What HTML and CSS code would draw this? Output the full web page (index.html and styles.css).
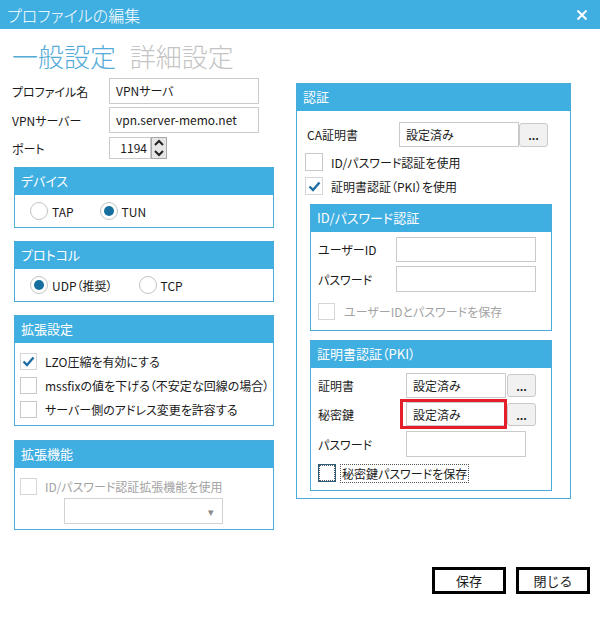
FILE: index.html
```html
<!DOCTYPE html>
<html lang="ja">
<head>
    <meta charset="UTF-8">
    <title>プロファイルの編集</title>
    <link rel="stylesheet" href="styles.css">
</head>
<body>
<div class="window">
    <div class="titlebar">
        <span class="title">プロファイルの編集</span>
        <svg class="close" width="12" height="12" viewBox="0 0 12 12"><path d="M1.5 1.5 L10.5 10.5 M10.5 1.5 L1.5 10.5" stroke="#fff" stroke-width="2" fill="none"/></svg>
    </div>

    <div class="tabs">
        <span class="tab active">一般設定</span>
        <span class="tab">詳細設定</span>
    </div>

    <div class="content">
        <!-- left column -->
        <div class="col-left">
            <div class="form-row">
                <span class="label">プロファイル名</span>
                <div class="textbox wide">VPNサーバ</div>
            </div>
            <div class="form-row">
                <span class="label">VPNサーバー</span>
                <div class="textbox wide">vpn.server-memo.net</div>
            </div>
            <div class="form-row port-row">
                <span class="label">ポート</span>
                <div class="spin">
                    <div class="textbox port">1194</div>
                    <div class="spin-buttons">
                        <svg width="14" height="10" viewBox="0 0 14 10"><path d="M3 7 L7 3 L11 7" stroke="#222" stroke-width="2" fill="none"/></svg>
                        <svg width="14" height="10" viewBox="0 0 14 10"><path d="M3 3 L7 7 L11 3" stroke="#222" stroke-width="2" fill="none"/></svg>
                    </div>
                </div>
            </div>

            <div class="panel panel-device">
                <div class="panel-header">デバイス</div>
                <div class="panel-body radios">
                    <span class="radio-item"><span class="radio"></span>TAP</span>
                    <span class="radio-item"><span class="radio on"></span>TUN</span>
                </div>
            </div>

            <div class="panel panel-protocol">
                <div class="panel-header">プロトコル</div>
                <div class="panel-body radios">
                    <span class="radio-item"><span class="radio on"></span>UDP（推奨）</span>
                    <span class="radio-item"><span class="radio"></span>TCP</span>
                </div>
            </div>

            <div class="panel panel-ext">
                <div class="panel-header">拡張設定</div>
                <div class="panel-body checks">
                    <div class="check-row"><span class="checkbox checked"><svg width="15" height="15" viewBox="0 0 15 15"><path d="M2.5 7.5 L6 11 L12.5 3.5" stroke="#1e6ea3" stroke-width="2.4" fill="none"/></svg></span>LZO圧縮を有効にする</div>
                    <div class="check-row"><span class="checkbox"></span>mssfixの値を下げる（不安定な回線の場合）</div>
                    <div class="check-row"><span class="checkbox"></span>サーバー側のアドレス変更を許容する</div>
                </div>
            </div>

            <div class="panel panel-plugin">
                <div class="panel-header">拡張機能</div>
                <div class="panel-body checks">
                    <div class="check-row disabled"><span class="checkbox"></span>ID/パスワード認証拡張機能を使用</div>
                    <div class="dropdown"><span class="arrow">▾</span></div>
                </div>
            </div>
        </div>

        <!-- right column -->
        <div class="col-right">
            <div class="panel panel-auth">
                <div class="panel-header">認証</div>
                <div class="panel-body">
                    <div class="file-row ca-row">
                        <span class="label">CA証明書</span>
                        <div class="textbox file">設定済み</div>
                        <span class="browse">...</span>
                    </div>
                    <div class="check-row"><span class="checkbox"></span>ID/パスワード認証を使用</div>
                    <div class="check-row"><span class="checkbox checked"><svg width="15" height="15" viewBox="0 0 15 15"><path d="M2.5 7.5 L6 11 L12.5 3.5" stroke="#1e6ea3" stroke-width="2.4" fill="none"/></svg></span>証明書認証（PKI）を使用</div>

                    <div class="panel sub-panel panel-idpw">
                        <div class="panel-header">ID/パスワード認証</div>
                        <div class="panel-body">
                            <div class="field-row">
                                <span class="label">ユーザーID</span>
                                <div class="textbox field"></div>
                            </div>
                            <div class="field-row">
                                <span class="label">パスワード</span>
                                <div class="textbox field tall"></div>
                            </div>
                            <div class="check-row disabled"><span class="checkbox"></span>ユーザーIDとパスワードを保存</div>
                        </div>
                    </div>

                    <div class="panel sub-panel panel-pki">
                        <div class="panel-header">証明書認証（PKI）</div>
                        <div class="panel-body">
                            <div class="file-row">
                                <span class="label">証明書</span>
                                <div class="textbox file">設定済み</div>
                                <span class="browse">...</span>
                            </div>
                            <div class="file-row key-row">
                                <span class="label">秘密鍵</span>
                                <div class="highlight"><div class="textbox file">設定済み</div></div>
                                <span class="browse">...</span>
                            </div>
                            <div class="file-row pw-row">
                                <span class="label">パスワード</span>
                                <div class="textbox pw"></div>
                            </div>
                            <div class="check-row focused"><span class="checkbox"></span><span class="focus-text">秘密鍵パスワードを保存</span></div>
                        </div>
                    </div>
                </div>
            </div>
        </div>
    </div>

    <div class="footer">
        <button class="btn">保存</button>
        <button class="btn">閉じる</button>
    </div>
</div>
</body>
</html>
```

FILE: styles.css
```css
/* dialog base */
body {
    margin: 0;
    background: #fff;
    font-family: "Noto Sans CJK JP", "Noto Sans", sans-serif;
    font-feature-settings: "palt";
    font-size: 12px;
    color: #1a1a1a;
}

.window {
    width: 600px;
    height: 628px;
    display: flex;
    flex-direction: column;
}

.titlebar {
    height: 29px;
    background: #3faee0;
    color: #fff;
    display: flex;
    align-items: center;
    justify-content: space-between;
    padding: 0 12px 0 7px;
    font-size: 16px;
    font-weight: 300;
}

.tabs {
    height: 49px;
    padding: 12px 0 0 12px;
    box-sizing: border-box;
    font-size: 26px;
    line-height: 30px;
    font-weight: 300;
}

.tab {
    color: #c4c4c4;
    margin-right: 8px;
}

.tab.active {
    color: #55abd8;
}

.content {
    display: flex;
    align-items: flex-start;
}

.col-left {
    width: 262px;
    margin-left: 12px;
}

.col-right {
    width: 275px;
    margin-left: 22px;
    margin-top: 5px;
}

/* text fields */
.form-row {
    display: grid;
    grid-template-columns: 97px auto;
    align-items: center;
    margin-bottom: 3px;
}

.form-row:nth-child(2) {
    margin-bottom: 4px;
}

.label {
    white-space: nowrap;
}

.textbox {
    box-sizing: border-box;
    border: 1px solid #cacaca;
    background: #fff;
    height: 26px;
    line-height: 24px;
    padding-left: 6px;
    white-space: nowrap;
}

.textbox.wide {
    width: 150px;
}

.spin {
    display: flex;
}

.textbox.port {
    width: 42px;
    height: 22px;
    line-height: 20px;
    text-align: right;
    padding: 0 3px 0 0;
}

.spin-buttons {
    width: 16px;
    height: 22px;
    box-sizing: border-box;
    border: 1px solid #a8a8a8;
    background: #e6e6e6;
    display: flex;
    flex-direction: column;
    align-items: center;
}

.spin-buttons svg {
    display: block;
    height: 10px;
}

/* panels */
.panel {
    border: 1px solid #4aaad9;
    box-sizing: border-box;
    background: #fff;
}

.col-left .panel {
    width: 260px;
    margin-left: 2px;
}

.panel-header {
    height: 27px;
    background: #3faee0;
    color: #fff;
    font-size: 13px;
    line-height: 26px;
    padding-left: 6px;
}

.panel-device {
    margin-top: 8px;
}

.panel-protocol,
.panel-ext {
    margin-top: 13px;
}

.panel-plugin {
    margin-top: 14px;
}

.radios {
    height: 32px;
    display: flex;
    align-items: center;
    padding-left: 15px;
    gap: 26px;
}

.radio-item {
    display: flex;
    align-items: center;
    gap: 4px;
}

.radio {
    width: 18px;
    height: 18px;
    box-sizing: border-box;
    border: 1px solid #c3c3c3;
    border-radius: 50%;
    background: #fff;
    display: flex;
    align-items: center;
    justify-content: center;
}

.radio.on::after {
    content: "";
    width: 10px;
    height: 10px;
    border-radius: 50%;
    background: #176f9f;
}

.checks {
    padding: 6px 0 4px 5px;
}

.check-row {
    height: 24px;
    display: flex;
    align-items: center;
    gap: 8px;
    white-space: nowrap;
}

.checkbox {
    width: 17px;
    height: 17px;
    box-sizing: border-box;
    border: 1px solid #c8c8c8;
    background: #fff;
    display: flex;
    align-items: center;
    justify-content: center;
}

.checkbox svg {
    display: block;
}

.checkbox.checked {
    border-color: #d6d6d6;
}

.check-row.disabled {
    color: #a3a3a3;
}

.check-row.disabled .checkbox {
    border-color: #d6d6d6;
}

.dropdown {
    width: 159px;
    height: 26px;
    margin: 0 0 1px 44px;
    box-sizing: border-box;
    border: 1px solid #d2d2d2;
    display: flex;
    align-items: center;
    justify-content: flex-end;
    padding-right: 8px;
}

.dropdown .arrow {
    color: #8a8a8a;
    font-size: 11px;
}

/* right side */
.panel-auth {
    height: 416px;
}

.panel-auth > .panel-body {
    padding: 11px 0 0 10px;
}

.panel-auth > .panel-body > .check-row {
    margin-left: -2px;
}

.panel-auth > .panel-body > .check-row .checkbox {
    width: 18px;
    height: 18px;
}

.file-row {
    display: grid;
    grid-template-columns: 92px 120px 29px;
    align-items: center;
}

.ca-row {
    margin-bottom: 3px;
}

.textbox.file {
    height: 25px;
    line-height: 23px;
}

.browse {
    height: 24px;
    box-sizing: border-box;
    border: 1px solid #c9c9c9;
    border-radius: 3px;
    background: #f1f1f1;
    text-align: center;
    font-size: 11px;
    font-weight: bold;
    line-height: 22px;
}

.sub-panel {
    width: 242px;
    margin-left: 3px;
}

.panel-idpw {
    margin-top: 6px;
}

.panel-pki {
    margin-top: 9px;
}

.sub-panel .panel-body {
    padding: 5px 0 7px 7px;
}

.field-row {
    display: grid;
    grid-template-columns: 78px 140px;
    align-items: center;
    margin-bottom: 4px;
}

.textbox.field {
    height: 25px;
}

.textbox.field.tall {
    height: 26px;
}

.sub-panel .check-row {
    margin-top: 7px;
    gap: 9px;
}

.panel-pki .panel-body {
    padding: 5px 0 5px 7px;
}

.panel-pki .file-row {
    grid-template-columns: 88px 100px 30px;
    margin-bottom: 4px;
}

.panel-pki .browse {
    margin-left: 1px;
    height: 23px;
}

.panel-pki .file-row.key-row {
    margin-bottom: 5px;
}

.panel-pki .key-row .textbox.file {
    height: 24px;
}

.highlight {
    position: relative;
}

.highlight::after {
    content: "";
    position: absolute;
    left: -6px;
    top: -3px;
    right: -1px;
    bottom: -3px;
    border: 3px solid #e41f2b;
}

.textbox.pw {
    width: 120px;
    grid-column: 2 / 4;
}

.panel-pki .check-row {
    margin-top: 2px;
    gap: 5px;
}

.check-row.focused .checkbox {
    width: 18px;
    height: 18px;
    border: 1px solid #2a5c7c;
    outline: 1px dotted #555;
    outline-offset: -2px;
}

.focus-text {
    outline: 1px dotted #555;
    padding: 0 1px;
    line-height: 17px;
}

/* footer buttons */
.footer {
    margin-top: 37px;
    display: flex;
    justify-content: flex-end;
    gap: 10px;
    padding-right: 10px;
}

.btn {
    width: 74px;
    height: 27px;
    border: 3px solid #000;
    background: #fff;
    font-family: inherit;
    font-size: 13px;
    color: #1a1a1a;
    padding: 0;
}
```
